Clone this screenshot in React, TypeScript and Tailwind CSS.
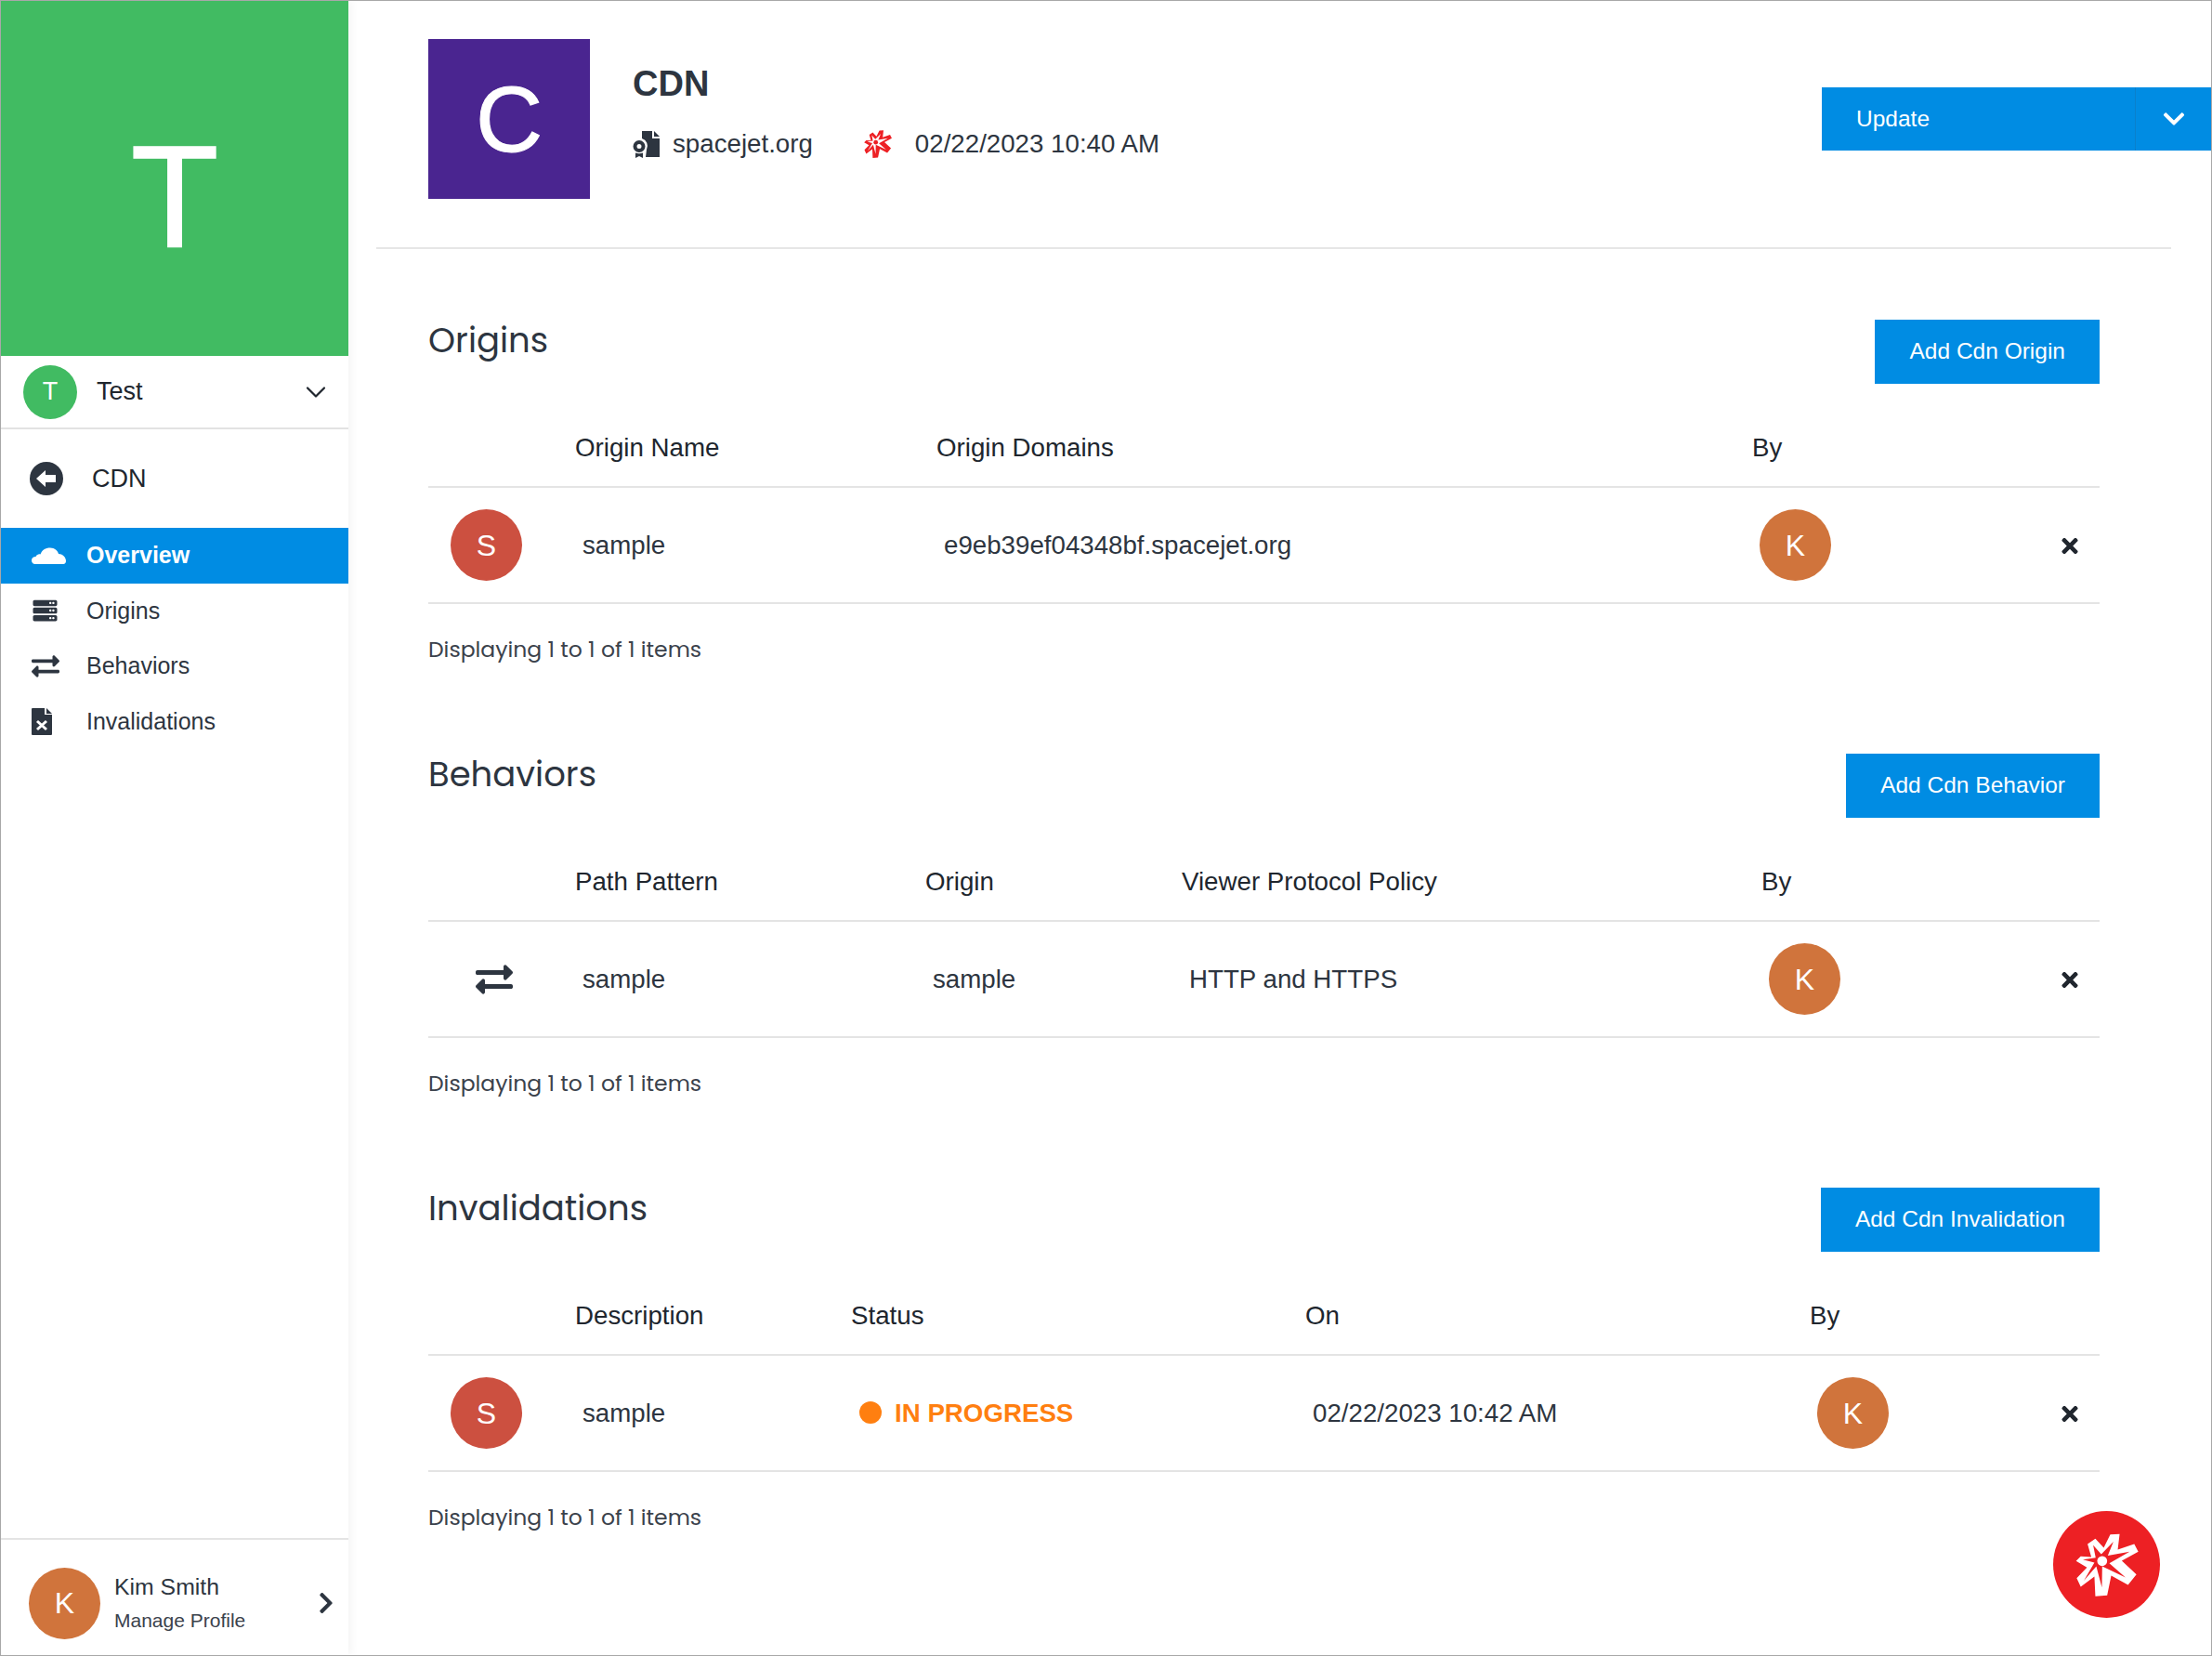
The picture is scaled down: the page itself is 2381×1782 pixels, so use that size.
import React from "react";
import { FaChevronDown, FaChevronRight, FaExchangeAlt, FaServer, FaTimes } from "react-icons/fa";
import { ChevronDown } from "lucide-react";

const Star = ({ outer, inner, dot, className }: { outer: string; inner: string; dot: string; className: string }) => (
  <svg viewBox="395 260 215 215" className={className}>
    <polygon fill={outer} points="513,270 543,268 537,318 590,300 603,325 550,354 597,398 570,432 516,402 503,465 465,468 462,405 418,438 405,410 438,376 403,355 418,340 452,342 440,300 465,283 492,312" />
    <polygon fill={inner} points="523,293 505,338 575,325 510,362 562,408 487,372 486,440 468,372 428,418 462,360 425,350 466,344 458,304 484,333" />
    <circle cx="487" cy="355" r="16" fill={dot} />
  </svg>
);

const CertIcon = () => (
  <svg viewBox="0 0 30 30" className="w-[30px] h-[30px] text-[#2d3540]" fill="currentColor">
    <path d="M10 1h11v8h8v20H14l1-8a8.500 8.500 0 0 0-5-12z" />
    <path d="M23 1l6 6h-6z" />
    <path fillRule="evenodd" d="M7 11a6.500 6.500 0 1 1 0 13 6.500 6.500 0 0 1 0-13zm0 4a2.500 2.500 0 1 0 0 5 2.500 2.500 0 0 0 0-5z" />
    <path d="M3 24.500q4 1.500 8 0V30l-4-2-4 2z" />
  </svg>
);

const CloudIcon = () => (
  <svg viewBox="0 0 37 18" className="w-[37px] h-[18px] text-white" fill="currentColor">
    <path d="M4 18C1 18 0 15.500 0 14c0-2.500 2-4 4.500-4 1-2 3-3 5-2.500C11 3 15 .5 20 .5c5 0 8 3 9 6.500 4 0 8 3.500 8 7.500 0 2-1 3.500-3 3.500z" />
  </svg>
);

const FileXIcon = () => (
  <svg viewBox="0 0 22 29" className="w-[22px] h-[29px] text-[#2d3540]">
    <path fill="currentColor" d="M0 1a1 1 0 0 1 1-1h13v7h8v21a1 1 0 0 1-1 1H1a1 1 0 0 1-1-1z" />
    <path fill="currentColor" d="M16 0l6 6h-6z" />
    <path stroke="#ffffff" strokeWidth="3" d="M6 14l10 9M16 14L6 23" />
  </svg>
);

const BackIcon = () => (
  <svg viewBox="0 0 36 36" className="w-[36px] h-[36px]">
    <circle cx="18" cy="18" r="18" fill="#2d3540" />
    <polygon fill="#ffffff" points="7,18 17,9 17,14 28,14 28,22 17,22 17,27" />
  </svg>
);

const Avatar = ({ letter, color, size = "w-[77px] h-[77px] text-[32px]" }: { letter: string; color: string; size?: string }) => (
  <div className={`${size} ${color} rounded-full flex items-center justify-center text-white shrink-0`}>{letter}</div>
);

const Section = ({
  title, action, cols, heads, children,
}: { title: string; action: string; cols: string; heads: string[]; children: React.ReactNode }) => (
  <section className="mb-[63px]">
    <div className="flex items-start justify-between h-[69px]">
      <h2 className="text-[#2d3540] text-[37px] leading-[42px] mt-[1px] font-['Poppins','Inter',sans-serif]">{title}</h2>
      <button className="h-[69px] px-[37px] bg-[#008ce3] text-white text-[24.500px]">{action}</button>
    </div>
    <div className={`grid ${cols} mt-[26px] h-[86px] items-start border-b-2 border-[#e4e4e4] text-[27.700px] text-[#20262e] leading-[32px] pt-[27px]`}>
      <span />
      {heads.map((h) => <span key={h}>{h}</span>)}
    </div>
    <div className={`grid ${cols} h-[125px] items-center border-b-2 border-[#e4e4e4] text-[27.700px] text-[#2d3540]`}>
      {children}
    </div>
    <div className="h-[98px] flex items-center text-[23.500px] text-[#3b424c] font-['Poppins','Inter',sans-serif]">Displaying 1 to 1 of 1 items</div>
  </section>
);

const CloseX = () => <FaTimes className="w-[18px] h-[25px] text-[#20262e] justify-self-end mr-[23px] mt-[2px]" />;

const K = () => <Avatar letter="K" color="bg-[#d0743c]" />;
const S = () => <div className="pl-[24px]"><Avatar letter="S" color="bg-[#cc5040]" /></div>;

const NavItem = ({ icon, label, active }: { icon: React.ReactNode; label: string; active?: boolean }) => (
  <div className={`h-[59.500px] flex items-center pl-[33px] text-[25px] ${active ? "bg-[#008ce3] text-white font-bold" : "text-[#2d3540]"}`}>
    <span className="w-[59px] flex items-center">{icon}</span>
    {label}
  </div>
);

export default function App() {
  return (
    <div className="w-[2381px] h-[1782px] flex overflow-hidden border border-[#a8a8a8] bg-white font-['Liberation_Sans',Arial,sans-serif]">
      <aside className="w-[374px] h-full flex flex-col shrink-0 shadow-[4px_0_8px_rgba(0,0,0,0.04)]">
        <div className="h-[382px] pt-[40px] bg-[#41bb62] flex items-center justify-center text-white text-[155px] leading-none [-webkit-text-stroke:1.500px_white]">T</div>
        <div className="h-[79px] flex items-center pl-[24px] pr-[17px] border-b-2 border-[#e2e2e2] text-[27px] text-[#20262e]">
          <Avatar letter="T" color="bg-[#41bb62]" size="w-[58px] h-[58px] text-[27px]" />
          <span className="ml-[21px]">Test</span>
          <ChevronDown className="ml-auto w-[36px] h-[36px] text-[#20262e]" strokeWidth={1.5} />
        </div>
        <div className="h-[106px] flex items-center pl-[31px] text-[27px] text-[#20262e]">
          <BackIcon />
          <span className="ml-[31px]">CDN</span>
        </div>
        <nav className="flex flex-col">
          <NavItem active label="Overview" icon={<CloudIcon />} />
          <NavItem label="Origins" icon={<FaServer className="w-[29px] h-[26px] text-[#2d3540]" />} />
          <NavItem label="Behaviors" icon={<FaExchangeAlt className="w-[30px] h-[30px] text-[#2d3540]" />} />
          <NavItem label="Invalidations" icon={<FileXIcon />} />
        </nav>
        <div className="mt-auto h-[126px] pt-[12px] border-t-2 border-[#e4e4e4] flex items-center pl-[30px] pr-[15px]">
          <Avatar letter="K" color="bg-[#d0743c]" />
          <div className="ml-[15px] flex flex-col pt-[2px]">
            <span className="text-[24.800px] leading-[36px] text-[#2d3540]">Kim Smith</span>
            <span className="text-[21px] leading-[36px] text-[#3b424c]">Manage Profile</span>
          </div>
          <FaChevronRight className="ml-auto w-[18px] h-[26px] text-[#2d3540]" />
        </div>
      </aside>
      <main className="flex-1 flex flex-col min-w-0">
        <header className="h-[267px] ml-[30px] mr-[43px] pl-[56px] border-b-2 border-[#e6e6e6] flex items-start shrink-0">
          <div className="mt-[41px] w-[174px] h-[172px] bg-[#4a2590] text-white text-[100px] flex items-center justify-center leading-none [-webkit-text-stroke:1px_white]">C</div>
          <div className="ml-[46px] mt-[65px]">
            <h1 className="text-[38px] leading-[48px] font-bold text-[#2d3540]">CDN</h1>
            <div className="mt-[21px] flex items-center text-[27.700px] text-[#2d3540] leading-[40px]">
              <CertIcon />
              <span className="ml-[13px]">spacejet.org</span>
              <Star outer="#ed2024" inner="#ffffff" dot="#ed2024" className="w-[32px] h-[32px] ml-[54px]" />
              <span className="ml-[24px]">02/22/2023 10:40 AM</span>
            </div>
          </div>
          <div className="ml-auto mr-[-43px] mt-[93px] w-[419px] h-[68px] bg-[#008ce3] text-white text-[24.500px] flex items-center">
            <span className="pl-[37px] flex-1">Update</span>
            <span className="w-[82px] h-full flex items-center justify-center border-l border-[#0a80cc]">
              <FaChevronDown className="w-[26px] h-[26px]" />
            </span>
          </div>
        </header>
        <div className="ml-[86px] mr-[120px] pt-[76px]">
          <Section title="Origins" action="Add Cdn Origin" cols="grid-cols-[158px_389px_878px_1fr]" heads={["Origin Name", "Origin Domains", "By"]}>
            <S />
            <span className="pl-[8px]">sample</span>
            <span className="pl-[8px]">e9eb39ef04348bf.spacejet.org</span>
            <div className="pl-[8px] flex justify-between items-center col-span-1">
              <K />
              <CloseX />
            </div>
          </Section>
          <Section title="Behaviors" action="Add Cdn Behavior" cols="grid-cols-[158px_377px_276px_624px_1fr]" heads={["Path Pattern", "Origin", "Viewer Protocol Policy", "By"]}>
            <div className="pl-[51px]"><FaExchangeAlt className="w-[40px] h-[40px] text-[#2d3540]" /></div>
            <span className="pl-[8px]">sample</span>
            <span className="pl-[8px]">sample</span>
            <span className="pl-[8px]">HTTP and HTTPS</span>
            <div className="pl-[8px] flex justify-between items-center">
              <K />
              <CloseX />
            </div>
          </Section>
          <Section title="Invalidations" action="Add Cdn Invalidation" cols="grid-cols-[158px_297px_489px_543px_1fr]" heads={["Description", "Status", "On", "By"]}>
            <S />
            <span className="pl-[8px]">sample</span>
            <span className="pl-[9px] flex items-center font-bold text-[#ff7f10]">
              <span className="w-[24px] h-[24px] rounded-full bg-[#ff7f10] mr-[14px]" />
              IN PROGRESS
            </span>
            <span className="pl-[8px]">02/22/2023 10:42 AM</span>
            <div className="pl-[8px] flex justify-between items-center">
              <K />
              <CloseX />
            </div>
          </Section>
        </div>
      </main>
      <div className="fixed left-[2210px] top-[1626px] w-[115px] h-[115px] rounded-full bg-[#ed2024] flex items-center justify-center">
        <Star outer="#ffffff" inner="#ed2024" dot="#ffffff" className="w-[72px] h-[72px]" />
      </div>
    </div>
  );
}
